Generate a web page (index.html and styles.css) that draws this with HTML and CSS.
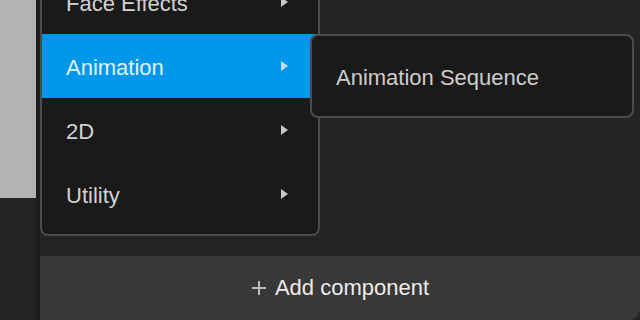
FILE: index.html
```html
<!DOCTYPE html>
<html lang="en">
<head>
    <meta charset="UTF-8">
    <meta name="viewport" content="width=device-width, initial-scale=1.0">
    <title>Add Component</title>
    <link rel="stylesheet" href="styles.css">
</head>
<body>
    <div class="app">
        <aside class="side">
            <div class="side-preview"></div>
        </aside>
        <div class="divider"></div>

        <section class="panel">
            <div class="panel-body">
                <ul class="menu">
                    <li class="menu-item"><span class="label">Face Effects</span> <span class="caret"></span></li>
                    <li class="menu-item active"><span class="label">Animation</span> <span class="caret"></span></li>
                    <li class="menu-item"><span class="label">2D</span> <span class="caret"></span></li>
                    <li class="menu-item"><span class="label">Utility</span> <span class="caret"></span></li>
                </ul>
                <ul class="submenu">
                    <li class="submenu-item">Animation Sequence</li>
                </ul>
            </div>

            <button type="button" class="add-button">
                <svg xmlns="http://www.w3.org/2000/svg" width="16" height="16" viewBox="0 0 16 16" fill="none" stroke="currentColor" stroke-width="2">
                    <line x1="8" y1="1" x2="8" y2="15"></line>
                    <line x1="1" y1="8" x2="15" y2="8"></line>
                </svg>
                Add component
            </button>
        </section>
    </div>
</body>
</html>
```

FILE: styles.css
```css
:root {
    --panel-bg: #242424;
    --menu-bg: #1a1a1a;
    --menu-border: #4c4c4c;
    --highlight: #0097ea;
    --text-color: #d2d2d2;
}

* {
    margin: 0;
    padding: 0;
    box-sizing: border-box;
    font-family: 'Liberation Sans', Arial, sans-serif;
}

body {
    width: 640px;
    height: 320px;
    overflow: hidden;
    background: #232323;
}

.app {
    display: flex;
    height: 100%;
}

.side {
    width: 36px;
    background: #232323;
}

.side-preview {
    height: 198px;
    background: #b3b3b3;
}

.divider {
    width: 4px;
    background: #1d1d1d;
}

.panel {
    flex: 1;
    display: flex;
    flex-direction: column;
    background: var(--panel-bg);
    border-bottom-right-radius: 12px;
    overflow: hidden;
}

.panel-body {
    flex: 1;
    position: relative;
}

.menu {
    list-style: none;
    position: absolute;
    left: 0;
    bottom: 20px;
    width: 280px;
    padding: 8px 0;
    background: var(--menu-bg);
    border: 2px solid var(--menu-border);
    border-radius: 8px;
}

.menu-item {
    height: 64px;
    display: flex;
    align-items: center;
    justify-content: space-between;
    padding: 0 30px 0 24px;
    color: var(--text-color);
    font-size: 22px;
}

.menu-item .label {
    padding-top: 3px;
}

.menu-item.active {
    background: var(--highlight);
    color: #e4f1fa;
}

.caret {
    width: 0;
    height: 0;
    border-top: 5px solid transparent;
    border-bottom: 5px solid transparent;
    border-left: 7px solid #c8c8c8;
}

.menu-item.active .caret {
    border-left-color: #c6dcea;
}

.submenu {
    list-style: none;
    position: absolute;
    left: 270px;
    top: 34px;
    width: 324px;
    height: 84px;
    display: flex;
    align-items: center;
    padding: 3px 24px 0;
    background: var(--menu-bg);
    border: 2px solid var(--menu-border);
    border-radius: 8px;
}

.submenu-item {
    color: #cdcdcd;
    font-size: 22px;
}

.add-button {
    height: 64px;
    display: flex;
    align-items: center;
    justify-content: center;
    gap: 8px;
    background: #383838;
    border: none;
    color: #ececec;
    font-size: 22px;
    cursor: pointer;
}

.add-button svg {
    color: #bdbdbd;
}
```
